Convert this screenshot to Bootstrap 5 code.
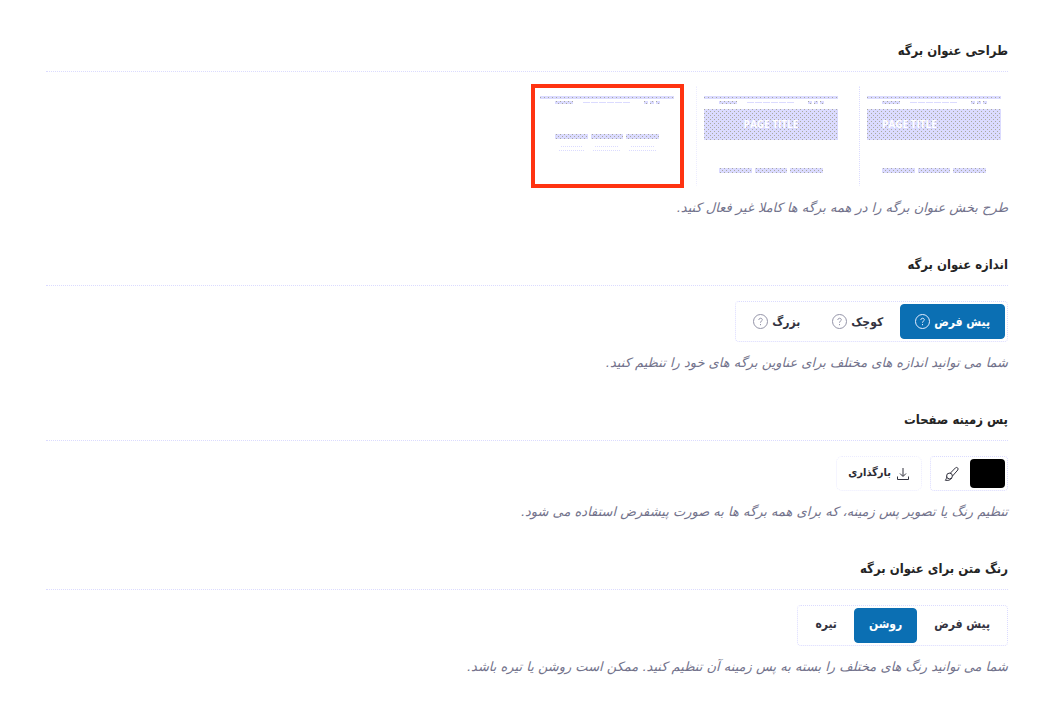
<!DOCTYPE html>
<html lang="fa" dir="rtl">
<head>
<meta charset="utf-8">
<meta name="viewport" content="width=device-width, initial-scale=1">
<title>تنظیمات عنوان برگه</title>
<link href="https://cdn.jsdelivr.net/npm/bootstrap@5.3.0/dist/css/bootstrap.min.css" rel="stylesheet">
<style>
  body { font-family: "DejaVu Sans", sans-serif; font-size: 13px; background: #fff; color: #2b2b33; }
  .options { padding: 32px 51px 32px 46px; }
  .option { margin-bottom: 28px; }
  .option-title { height: 40px; line-height: 38px; margin: 0 0 15px; font-family: "DejaVu Sans Condensed", "DejaVu Sans", sans-serif; font-size: 13px; font-weight: 700; color: #242424; border-bottom: 1px dotted #dbdbff; }
  .option-title.tight { margin-bottom: 14px; }
  .option-note { margin: 11px 0 0; font-size: 13px; line-height: 20px; font-style: italic; color: #73738c; }
  .thumbs { gap: 14px; padding-bottom: 1px; }
  .thumb { width: 149px; height: 100px; border: 1px dotted transparent; border-left-color: #ececff; cursor: pointer; }
  .thumb:first-of-type { border-left-color: #dbdbff; }
  .thumb svg { display: block; width: 100%; height: 100%; }
  .btn-check:checked + .thumb { border: 2px solid #ff3311; box-shadow: 0 0 0 2px #ff3311; }
  .segments { padding: 2px; gap: 2px; border: 1px dotted #dbdbff; border-radius: 4px; }
  .segments .btn { height: 35px; padding: 0 14px; gap: 4px; font-family: "DejaVu Sans Condensed", "DejaVu Sans", sans-serif; font-size: 12px; font-weight: 700; line-height: 30px; color: #33333f; border-radius: 4px; }
  .segments .btn-check:checked + .btn { background: #0b6fb3; border-color: #0b6fb3; color: #fff; }
  .help { width: 15px; height: 15px; color: #9494a8; }
  .btn-check:checked + .btn .help { color: #e4edff; }
  .swatch { width: 35px; height: 29px; padding: 0; background: #000; border: 0; border-radius: 4px; }
  .tool { width: 37px; height: 29px; padding: 0; border: 0; }
  .upload { height: 35px; padding: 0 11px; gap: 5px; font-family: "DejaVu Sans Condensed", "DejaVu Sans", sans-serif; font-size: 11px; font-weight: 700; color: #2b2b33; border: 1px dotted #ececff; }
</style>
</head>
<body>
<svg width="0" height="0" class="position-absolute" aria-hidden="true">
  <defs>
    <pattern id="grain" width="4" height="4" patternUnits="userSpaceOnUse">
      <path fill="#dbdbff" d="M0 0h4v4H0z"/><path fill="#aaaaa0" d="M0 0h1v1H0zM2 2h1v1H2z"/>
    </pattern>
    <g id="site-top">
      <path fill="url(#grain)" d="M8 11h134v3H8zM23 16h18v3H23zM112 16h4v3h-4zM118 16h4v3h-4zM124 16h4v3h-4z"/>
      <path stroke="#dbdbff" stroke-dasharray="7 1" d="M51 17.500h48"/>
    </g>
    <g id="site-columns">
      <path fill="url(#grain)" d="M23 0h33v5H23zM59 0h32v5H59zM94 0h33v5H94z"/>
    </g>
    <g id="site-banner"><path fill="url(#grain)" d="M8 24h134v31H8z"/></g>
  </defs>
</svg>
<main class="options">
  <section class="option">
    <h2 class="option-title tight">طراحی عنوان برگه</h2>
    <div class="thumbs d-flex flex-wrap" role="radiogroup" aria-label="طراحی عنوان برگه">
      <input class="btn-check" type="radio" name="design" id="design-left">
      <label class="thumb" for="design-left">
        <svg viewBox="1 2 147 98" direction="ltr"><use href="#site-top"/><use href="#site-banner"/><text x="23" y="43" fill="#fff" font-family="Open Sans, sans-serif" font-weight="700" font-size="10">PAGE TITLE</text><use href="#site-columns" y="83"/></svg>
      </label>
      <input class="btn-check" type="radio" name="design" id="design-center">
      <label class="thumb" for="design-center">
        <svg viewBox="1 2 147 98" direction="ltr"><use href="#site-top"/><use href="#site-banner"/><text x="75" y="43" text-anchor="middle" fill="#fff" font-family="Open Sans, sans-serif" font-weight="700" font-size="10">PAGE TITLE</text><use href="#site-columns" y="83"/></svg>
      </label>
      <input class="btn-check" type="radio" name="design" id="design-none" checked>
      <label class="thumb" for="design-none">
        <svg viewBox="3 3 145 96"><use href="#site-top"/><use href="#site-columns" y="49"/><path stroke="#dbdbff" stroke-dasharray="1 1" d="M29 61.500h22M63 61.500h24M99 61.500h23M27 65.500h25M61 65.500h27M97 65.500h27"/></svg>
      </label>
    </div>
    <p class="option-note">طرح بخش عنوان برگه را در همه برگه ها کاملا غیر فعال کنید.</p>
  </section>

  <section class="option">
    <h2 class="option-title">اندازه عنوان برگه</h2>
    <div class="d-flex">
      <div class="segments d-flex" role="radiogroup" aria-label="اندازه عنوان برگه">
        <input class="btn-check" type="radio" name="size" id="size-default" checked>
        <label class="btn d-flex align-items-center" for="size-default">پیش فرض
          <svg class="help" viewBox="0 0 15 15" fill="none" stroke="currentColor"><circle cx="7.500" cy="7.500" r="7"/><path d="M5.800 6c0-2.300 3.500-2.300 3.500-.2 0 1.300-1.800 1.300-1.800 2.900M7.500 10v1.200"/></svg></label>
        <input class="btn-check" type="radio" name="size" id="size-small">
        <label class="btn d-flex align-items-center" for="size-small">کوچک
          <svg class="help" viewBox="0 0 15 15" fill="none" stroke="currentColor"><circle cx="7.500" cy="7.500" r="7"/><path d="M5.800 6c0-2.300 3.500-2.300 3.500-.2 0 1.300-1.800 1.300-1.800 2.900M7.500 10v1.200"/></svg></label>
        <input class="btn-check" type="radio" name="size" id="size-large">
        <label class="btn d-flex align-items-center" for="size-large">بزرگ
          <svg class="help" viewBox="0 0 15 15" fill="none" stroke="currentColor"><circle cx="7.500" cy="7.500" r="7"/><path d="M5.800 6c0-2.300 3.500-2.300 3.500-.2 0 1.300-1.800 1.300-1.800 2.900M7.500 10v1.200"/></svg></label>
      </div>
    </div>
    <p class="option-note">شما می توانید اندازه های مختلف برای عناوین برگه های خود را تنظیم کنید.</p>
  </section>

  <section class="option">
    <h2 class="option-title">پس زمینه صفحات</h2>
    <div class="d-flex gap-2">
      <div class="segments d-flex gap-0">
        <button type="button" class="swatch" aria-label="رنگ"></button>
        <button type="button" class="tool bg-transparent d-flex align-items-center justify-content-center" aria-label="قلم مو">
          <svg width="16" height="16" viewBox="0 0 16 16" fill="none" stroke="#33333f" stroke-linejoin="round"><path d="M6 7.500 11.500 1.800c1.400-1.200 3.400.6 2.300 2.200L8.500 10"/><circle cx="5.500" cy="10" r="2.900"/><path d="M2.600 10.500c0 1.700-.3 2.700-1.400 3.700 2.500.6 5.300.1 6.600-2.200"/></svg>
        </button>
      </div>
      <button type="button" class="btn upload d-flex align-items-center">
        <svg width="14" height="14" viewBox="0 0 14 14" fill="none" stroke="#33333f"><path d="M7 1v8M4 6.500l3 3 3-3M1.500 9.500v3h11v-3"/></svg>بارگذاری</button>
    </div>
    <p class="option-note">تنظیم رنگ یا تصویر پس زمینه، که برای همه برگه ها به صورت پیشفرض استفاده می شود.</p>
  </section>

  <section>
    <h2 class="option-title">رنگ متن برای عنوان برگه</h2>
    <div class="d-flex">
      <div class="segments d-flex" role="radiogroup" aria-label="رنگ متن برای عنوان برگه">
        <input class="btn-check" type="radio" name="tone" id="tone-default">
        <label class="btn" for="tone-default">پیش فرض</label>
        <input class="btn-check" type="radio" name="tone" id="tone-light" checked>
        <label class="btn" for="tone-light">روشن</label>
        <input class="btn-check" type="radio" name="tone" id="tone-dark">
        <label class="btn" for="tone-dark">تیره</label>
      </div>
    </div>
    <p class="option-note">شما می توانید رنگ های مختلف را بسته به پس زمینه آن تنظیم کنید. ممکن است روشن یا تیره باشد.</p>
  </section>
</main>
<script src="https://cdn.jsdelivr.net/npm/bootstrap@5.3.0/dist/js/bootstrap.bundle.min.js"></script>
</body>
</html>
